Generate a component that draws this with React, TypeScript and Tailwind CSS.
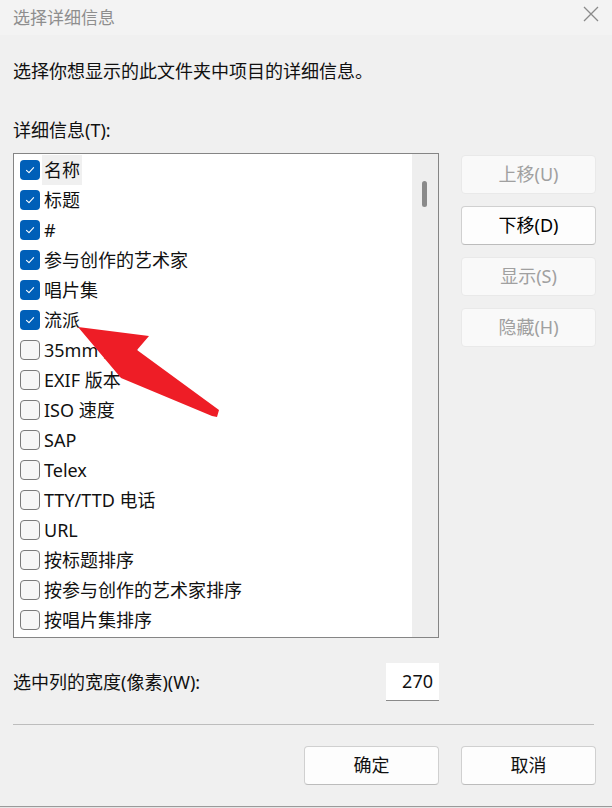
import React from "react";

type Item = { label: string; checked: boolean };

const items: Item[] = [
  { label: "名称", checked: true },
  { label: "标题", checked: true },
  { label: "#", checked: true },
  { label: "参与创作的艺术家", checked: true },
  { label: "唱片集", checked: true },
  { label: "流派", checked: true },
  { label: "35mm 焦距", checked: false },
  { label: "EXIF 版本", checked: false },
  { label: "ISO 速度", checked: false },
  { label: "SAP", checked: false },
  { label: "Telex", checked: false },
  { label: "TTY/TTD 电话", checked: false },
  { label: "URL", checked: false },
  { label: "按标题排序", checked: false },
  { label: "按参与创作的艺术家排序", checked: false },
  { label: "按唱片集排序", checked: false },
];

const CheckBox: React.FC<{ checked: boolean }> = ({ checked }) =>
  checked ? (
    <span className="flex h-[20px] w-[20px] shrink-0 items-center justify-center rounded-[4px] bg-[#005fb8]">
      <svg width="12" height="12" viewBox="0 0 12 12" fill="none">
        <path d="M2.5 6.3 L5 8.6 L9.6 3.6" stroke="#ffffff" strokeWidth="1.1" strokeLinecap="round" strokeLinejoin="round" />
      </svg>
    </span>
  ) : (
    <span className="h-[20px] w-[20px] shrink-0 rounded-[4px] border border-[#7a7a7a] bg-[#f6f6f6]" />
  );

const SideButton: React.FC<{ label: string; enabled?: boolean }> = ({ label, enabled }) => (
  <button
    className={
      enabled
        ? "flex h-[39px] w-[135px] items-center justify-center rounded-[4px] border border-[#d0d0d0] border-b-[#bcbcbc] bg-[#fdfdfd] text-[18px] text-black"
        : "flex h-[39px] w-[135px] items-center justify-center rounded-[4px] border border-[#e9e9e9] bg-[#f9f9f9] text-[18px] text-[#a0a0a0]"
    }
  >
    {label}
  </button>
);

const App: React.FC = () => {
  return (
    <div className="relative flex h-[808px] w-[612px] flex-col overflow-hidden bg-[#f0f0f0] font-['Noto_Sans','Noto_Sans_CJK_SC',sans-serif] text-[#111111]">
      {/* title bar */}
      <div className="flex h-[35px] items-center justify-between bg-[#f3f3f3] pl-[13px] pr-[13px]">
        <span className="text-[17px] leading-[24px] text-[#8e8e8e]">选择详细信息</span>
        <svg width="16" height="16" viewBox="0 0 16 16" className="mb-[8px]">
          <path d="M1 1 L15 15 M15 1 L1 15" stroke="#8a8a8a" strokeWidth="1.3" />
        </svg>
      </div>

      <div className="flex flex-col px-[13px]">
        <p className="mt-[24px] text-[18px] leading-[24px]">选择你想显示的此文件夹中项目的详细信息。</p>
        <p className="mt-[35px] text-[18px] leading-[24px]">详细信息(T):</p>

        <div className="mt-[11px] flex">
          <div className="flex h-[485px] w-[426px] border border-[#858585] bg-white">
            <div className="flex flex-1 flex-col pt-[1px]">
              {items.map((it, i) => (
                <div key={it.label} className="flex h-[30px] shrink-0 items-center pl-[6px]">
                  <CheckBox checked={it.checked} />
                  <span
                    className={
                      i === 0
                        ? "ml-[2px] flex h-full items-center bg-[#f0f0f0] px-[2px] text-[18px] leading-[24px]"
                        : "ml-[2px] flex h-full items-center px-[2px] text-[18px] leading-[24px]"
                    }
                  >
                    {it.label}
                  </span>
                </div>
              ))}
            </div>
            <div className="w-[26px] bg-[#eeeeee] pl-[10px] pt-[27px]">
              <div className="h-[26px] w-[5px] rounded-full bg-[#8a8a8a]" />
            </div>
          </div>

          <div className="ml-[22px] mt-[2px] flex flex-col gap-[12px]">
            <SideButton label="上移(U)" />
            <SideButton label="下移(D)" enabled />
            <SideButton label="显示(S)" />
            <SideButton label="隐藏(H)" />
          </div>
        </div>

        <div className="mt-[25px] flex w-[426px] items-center justify-between">
          <span className="text-[18px] leading-[24px]">选中列的宽度(像素)(W):</span>
          <div className="flex h-[38px] w-[53px] items-center justify-end border-b border-[#8a8a8a] bg-white pr-[6px] text-[18px]">
            270
          </div>
        </div>

        <div className="mt-[23px] h-[1px] w-[581px] bg-[#bdbdbd]" />

        <div className="mr-[3px] mt-[21px] flex justify-end gap-[22px]">
          <button className="flex h-[39px] w-[135px] items-center justify-center rounded-[4px] border border-[#d0d0d0] border-b-[#bcbcbc] bg-[#fdfdfd] text-[18px]">
            确定
          </button>
          <button className="flex h-[39px] w-[135px] items-center justify-center rounded-[4px] border border-[#d0d0d0] border-b-[#bcbcbc] bg-[#fdfdfd] text-[18px]">
            取消
          </button>
        </div>
      </div>

      <div className="flex-1" />
      <div className="h-[2px] border-t border-[#9a9a9a] bg-[#e6e6e6]" />

      {/* red annotation arrow */}
      <svg className="pointer-events-none absolute left-0 top-0" width="612" height="808">
        <polygon
          points="78,327 149,336 137,350 219,410 217,417 212,416 121,378"
          fill="#ee1d26"
          strokeLinejoin="round"
        />
      </svg>
    </div>
  );
};

export default App;
